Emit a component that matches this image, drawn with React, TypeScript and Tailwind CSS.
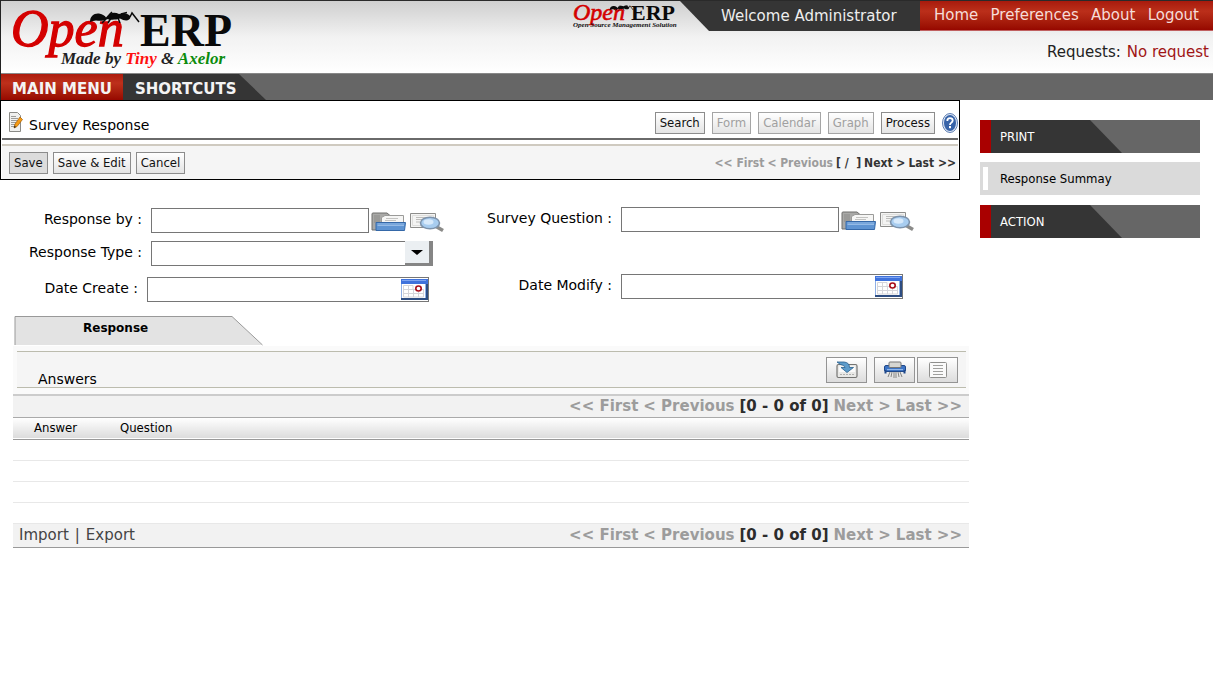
import type { ReactNode } from "react";

function Ant() {
  return (
    <g>
      <path
        d="M89 21 C89 15 93 12 98 12.500 C102 13 104 15 105 16.500 C108 12 113 10.500 118 13 C122 11.500 128 12 129.500 16 C129 20 124 20.500 119 17.500 C115 19 109 19 105.500 18 C103 20 99 20 95 19.500 C93 19.500 91 20 89 21 Z"
        fill="#0a0a0a"
      />
      <path
        d="M106 17 L101 22 M110 17 L107 22 M117 17 L119 22 M108 14 L111 11 M120 13 L126 11.500 M129 16 L131 12 L138 21"
        fill="none"
        stroke="#0a0a0a"
        strokeWidth="1.5"
      />
    </g>
  );
}

function Logo() {
  return (
    <svg viewBox="0 0 240 72" className="block h-[72px] w-[240px]" role="img" aria-label="Open ERP">
      <text
        x="10"
        y="45"
        fill="#d40000"
        stroke="#d40000"
        strokeWidth="1.3"
        className="font-['Liberation_Serif',serif] text-[52px] italic"
      >
        Open
      </text>
      <text x="139" y="45" fill="#0a0a0a" className="font-['Liberation_Serif',serif] text-[46px] font-bold">
        ERP
      </text>
      <Ant />
      <text x="60" y="63" fill="#222" className="font-['Liberation_Serif',serif] text-[17px] font-bold italic">
        Made by <tspan fill="#ff1010">Tiny</tspan> &amp; <tspan fill="#0c8c0c">Axelor</tspan>
      </text>
    </svg>
  );
}

function SmallLogo() {
  return (
    <svg viewBox="0 0 108 30" className="block h-[30px] w-[108px]" role="img" aria-label="Open ERP, Open Source Management Solution">
      <text
        x="1"
        y="19"
        fill="#d40000"
        stroke="#d40000"
        strokeWidth=".6"
        className="font-['Liberation_Serif',serif] text-[24px] italic"
      >
        Open
      </text>
      <text x="59" y="19" fill="#0a0a0a" className="font-['Liberation_Serif',serif] text-[22px] font-bold">
        ERP
      </text>
      <g transform="translate(-5 -1) scale(0.48)">
        <Ant />
      </g>
      <text x="1" y="26" fill="#111" className="font-['Liberation_Serif',serif] text-[7px] font-bold italic">
        Open Source Management Solution
      </text>
    </svg>
  );
}

function NoteIcon() {
  return (
    <svg viewBox="0 0 15 20" className="block h-5 w-[15px]" aria-hidden="true">
      <path d="M1.500 .5 H9.500 L12.500 3.500 V19.500 H1.500 Z" fill="#f0f0ee" stroke="#8a8a86" />
      <path d="M3 4.500 H8 M3 6.500 H10 M3 8.500 H9 M3 10.500 H8 M3 12.500 H7 M3 14.500 H6" stroke="#9c9c9a" />
      <path d="M6 16 L7 12 L12 5 L14.500 7.500 L9 14.500 Z" fill="#f59a12" stroke="#a35b00" strokeWidth=".7" />
      <path d="M6 16 L6.500 13.500 L8 15 Z" fill="#222" />
    </svg>
  );
}

function HelpIcon() {
  return (
    <svg viewBox="0 0 16 20" className="block h-5 w-4" aria-hidden="true">
      <ellipse cx="8" cy="10" rx="7.500" ry="9.500" fill="#e2eaf6" stroke="#5f7fb3" />
      <ellipse cx="8" cy="10" rx="6" ry="8" fill="#3763a8" />
      <path d="M5.300 8 Q5.300 5.200 8 5.200 Q10.700 5.200 10.700 7.600 Q10.700 9 9 10 Q8 10.600 8 12" fill="none" stroke="#fff" strokeWidth="1.800" />
      <rect x="7" y="13" width="2" height="2.200" fill="#fff" />
    </svg>
  );
}

function FolderIcon() {
  return (
    <svg viewBox="0 0 35 20" className="block h-5 w-[35px]" aria-hidden="true">
      <path d="M1 18 V2 Q1 1 2 1 H16 L19 3.500 H21 V18 Z" fill="#a9a9a7" stroke="#6f6f6d" />
      <path d="M3 4 H9 M3 6 H9 M3 8 H9 M3 10 H9" stroke="#8b8b89" />
      <path d="M10.500 11 V5.500 L14 3.500 H32.500 V12 H10.500 Z" fill="#f6f6f5" stroke="#9b9b99" />
      <path d="M15 6.500 H27 M14 8.500 H25" stroke="#c4c4c2" />
      <path d="M5 10.500 H34.500 L33.500 18.500 H5 Z" fill="#5f94d2" stroke="#3568a8" />
      <path d="M6.500 12 H33 M6.500 13.500 H33" stroke="#94bae6" />
    </svg>
  );
}

function FindIcon() {
  return (
    <svg viewBox="0 0 35 20" className="block h-5 w-[35px]" aria-hidden="true">
      <path d="M.5 1.500 H25.500 V15.500 H.5 Z" fill="#f4f4f3" stroke="#8d8d8b" />
      <path d="M2.500 3.500 H23.500 V13.500 H2.500 Z" fill="none" stroke="#dededc" />
      <path d="M6 5.500 H19 M6 7.500 H15 M6 10 H10" stroke="#bdbdbb" />
      <path d="M26 14.500 L33 18.500" stroke="#8b8b89" strokeWidth="3.500" />
      <ellipse cx="20" cy="11" rx="9.500" ry="5.800" fill="#a8cdf0" stroke="#7d93ac" strokeWidth="1.600" />
      <ellipse cx="18.500" cy="10" rx="5" ry="2.800" fill="#d8eafb" />
    </svg>
  );
}

function CalendarIcon() {
  return (
    <svg viewBox="0 0 27 21" className="block h-[21px] w-[27px]" aria-hidden="true">
      <rect width="27" height="21" fill="#2d4d82" />
      <rect width="25" height="19" fill="#8fb0e6" />
      <rect x="1" y="5" width="23" height="14" fill="#fff" />
      <rect width="27" height="5" fill="#3f72dc" />
      <rect x="1" y="1" width="24" height="1" fill="#7ea4f0" />
      <path
        d="M2.500 6.500 H12 V10.500 H22.500 V18 H2.500 Z M2.500 10.500 H12 M2.500 14.500 H22.500 M7.500 6.500 V18 M12.500 10.500 V18 M17.500 12 V18"
        fill="none"
        stroke="#d5d5da"
      />
      <ellipse cx="17.500" cy="9.500" rx="2.700" ry="2.500" fill="#fff" stroke="#a80f1c" strokeWidth="1.600" />
    </svg>
  );
}

function ImportIcon() {
  return (
    <svg viewBox="0 0 22 18" className="block h-[18px] w-[22px]" aria-hidden="true">
      <rect x="1" y="3.500" width="20" height="13" rx="1.500" fill="#e9e9e7" stroke="#747472" strokeWidth="1.200" />
      <path d="M3 5.500 H19 V11 H3 Z" fill="#fafafa" />
      <path d="M4 13.500 H18" stroke="#b0b0ae" strokeDasharray="2 1" />
      <path d="M1 1 H8 Q13.500 1.500 13.500 6.500 H17.500 L11 11.500 L5 6.500 H9 Q8.500 4 4.500 3.500 Z" fill="#5d9ccb" stroke="#285f8e" strokeWidth=".8" />
    </svg>
  );
}

function ShredderIcon() {
  return (
    <svg viewBox="0 0 22 18" className="block h-[18px] w-[22px]" aria-hidden="true">
      <rect x=".5" y="4.500" width="21" height="6" rx="1.500" fill="#3d74c4" stroke="#1f488a" />
      <path d="M3 8.500 H19" stroke="#8fb6ea" />
      <path d="M1.500 9 V12.500 M20.500 9 V12.500" stroke="#1f488a" strokeWidth="2" />
      <rect x="5" y="1" width="12" height="5.500" rx="1" fill="#d6d6d2" stroke="#777" />
      <path d="M6 11 L4 16 M8 11 L7 16 M10 11 V17 M12 11 V17 M14 11 L15 16 M16 11 L18 16" stroke="#858583" fill="none" />
    </svg>
  );
}

function ListIcon() {
  return (
    <svg viewBox="0 0 18 18" className="block size-[18px]" aria-hidden="true">
      <rect x=".5" y="1.500" width="17" height="15" rx="1" fill="#fafafa" stroke="#8f8f8d" />
      <path d="M4 4.500 H14 M4 7.500 H14 M4 10.500 H14 M4 13.500 H14" stroke="#a0a09e" />
    </svg>
  );
}

function Btn({ children, disabled, pressed }: { children: ReactNode; disabled?: boolean; pressed?: boolean }) {
  return (
    <button
      type="button"
      disabled={disabled}
      className={`h-[22px] border border-[#8c8c8c] px-1 font-['DejaVu_Sans_Condensed','DejaVu_Sans',sans-serif] text-[13px] leading-5 text-[#111] disabled:border-[#a5a5a5] disabled:text-[#a0a0a0] ${
        pressed ? "bg-[#dcdcdc]" : "bg-linear-to-b from-white to-[#e4e4e4]"
      }`}
    >
      {children}
    </button>
  );
}

function IconBtn({ label, children }: { label: string; children: ReactNode }) {
  return (
    <button
      type="button"
      aria-label={label}
      className="flex h-[26px] w-[41px] items-center justify-center border border-[#949494] bg-linear-to-b from-white to-[#dcdcdc]"
    >
      {children}
    </button>
  );
}

function RelationField({ id }: { id: string }) {
  return (
    <>
      <input id={id} type="text" className="h-[25px] w-[218px] border border-[#767676] bg-white px-1" />
      <button type="button" aria-label="Open record" className="ml-0.5 pt-0.5">
        <FolderIcon />
      </button>
      <button type="button" aria-label="Find record" className="ml-1 pt-0.5">
        <FindIcon />
      </button>
    </>
  );
}

function DateField({ id }: { id: string }) {
  return (
    <div className="flex h-[25px] w-[282px] items-center border border-[#767676] bg-white">
      <input id={id} type="text" className="h-full min-w-0 flex-1 px-1" />
      <button type="button" aria-label="Pick a date">
        <CalendarIcon />
      </button>
    </div>
  );
}

function ListPager() {
  return (
    <div className="flex gap-[5px] text-[15px] font-bold text-[#9c9c9c]">
      <span>&lt;&lt; First</span>
      <span>&lt; Previous</span>
      <span className="text-[#2c2c2c]">[0 - 0 of 0]</span>
      <span>Next &gt;</span>
      <span>Last &gt;&gt;</span>
    </div>
  );
}

function SideHeading({ children }: { children: ReactNode }) {
  return (
    <h2 className="flex h-[33px] border-l-[11px] border-[#a90000] bg-[#666]">
      <span className="flex w-[131px] items-center bg-[#353535] pl-[9px] font-['DejaVu_Sans_Condensed','DejaVu_Sans',sans-serif] text-[13px] text-white [clip-path:polygon(0_0,99px_0,131px_100%,0_100%)]">
        {children}
      </span>
    </h2>
  );
}

export default function App() {
  return (
    <div className="min-h-screen bg-white font-['DejaVu_Sans',sans-serif] text-[14px] text-black">
      <header className="mr-0.5 border-l border-[#222]">
        <div className="flex h-[73px] justify-between border-t border-[#2a2a2a] bg-linear-to-b from-[#cfcfcf] via-[#f2f2f2] via-50% to-white">
          <Logo />
          <div className="flex flex-col">
            <div className="flex h-[30px]">
              <SmallLogo />
              <div className="flex w-60 items-center bg-[#353535] pl-[41px] text-[15px] text-[#eee] [clip-path:polygon(0_0,100%_0,100%_100%,29px_100%)]">
                Welcome Administrator
              </div>
              <nav className="flex w-[293px] items-center justify-between border-b border-[#c06060] bg-linear-to-b from-[#a81a0c] via-[#bb2f1a] via-35% to-[#960700] px-3.5 text-[15px] text-[#f6dcd8]">
                <a href="#home">Home</a>
                <a href="#preferences">Preferences</a>
                <a href="#about">About</a>
                <a href="#logout">Logout</a>
              </nav>
            </div>
            <p className="flex flex-1 items-center justify-end gap-1.5 pr-1 text-[15px] text-[#222]">
              Requests:
              <a href="#requests" className="text-[#a01515]">
                No request
              </a>
            </p>
          </div>
        </div>
        <nav className="flex h-[27px] border-t border-[#888] bg-[#666] text-[15px] font-bold text-[#f4f4f4]">
          <a href="#menu" className="flex w-[122px] items-center justify-center bg-linear-to-b from-[#ad1b0d] via-[#bd301b] via-35% to-[#960700] pt-1">
            MAIN MENU
          </a>
          <a href="#shortcuts" className="flex w-[143px] items-center bg-[#353535] pt-1 pl-3 [clip-path:polygon(0_0,116px_0,100%_100%,0_100%)]">
            SHORTCUTS
          </a>
        </nav>
      </header>

      <div className="flex">
        <main className="min-w-0 flex-1">
          <section className="mr-5 border border-black">
            <div className="mx-px flex h-[39px] items-center justify-between border-b-2 border-[#6a6a6a] pt-1.5 pl-1.5">
              <div className="flex items-center gap-1.5">
                <div className="pb-0.5">
                  <NoteIcon />
                </div>
                <h1 className="pt-1.5 text-[14px]">Survey Response</h1>
              </div>
              <div className="flex items-center gap-[7px]">
                <Btn>Search</Btn>
                <Btn disabled>Form</Btn>
                <Btn disabled>Calendar</Btn>
                <Btn disabled>Graph</Btn>
                <Btn>Process</Btn>
                <button type="button" aria-label="Help">
                  <HelpIcon />
                </button>
              </div>
            </div>
            <div className="mx-px mt-1 flex h-[35px] items-center justify-between border-t-2 border-[#cfcac0] bg-[#f5f5f5] pr-0.5 pl-[7px]">
              <div className="flex gap-[5px]">
                <Btn pressed>Save</Btn>
                <Btn>Save &amp; Edit</Btn>
                <Btn>Cancel</Btn>
              </div>
              <div className="flex gap-[3px] font-['DejaVu_Sans_Condensed','DejaVu_Sans',sans-serif] text-[12px] font-bold whitespace-pre text-[#333]">
                <span className="text-[#9c9c9c]">&lt;&lt; First</span>
                <span className="text-[#9c9c9c]">&lt; Previous</span>
                <span>{"[ /  ]"}</span>
                <span>Next &gt;</span>
                <span>Last &gt;&gt;</span>
              </div>
            </div>
          </section>

          <form className="flex">
            <div className="flex flex-col pt-7">
              <div className="flex items-center">
                <label htmlFor="by" className="mr-[9px] w-[142px] pb-0.5 text-right">Response by :</label>
                <RelationField id="by" />
              </div>
              <div className="mt-2 flex items-center">
                <label htmlFor="type" className="mr-[9px] w-[142px] pb-0.5 text-right">Response Type :</label>
                <div className="relative">
                  <select id="type" className="block h-[25px] w-[282px] appearance-none border border-[#767676] bg-white px-1">
                    <option></option>
                  </select>
                  <span className="pointer-events-none absolute top-0 right-0 flex h-[25px] w-7 items-center justify-center border-r-4 border-b-3 border-[#858585] bg-[#ebeff2]">
                    <svg viewBox="0 0 12 5" className="h-[5px] w-3" aria-hidden="true">
                      <path d="M0 0 H12 L6 5 Z" />
                    </svg>
                  </span>
                </div>
              </div>
              <div className="mt-[11px] flex items-center">
                <label htmlFor="created" className="mr-[9px] w-[138px] pb-0.5 text-right">Date Create :</label>
                <DateField id="created" />
              </div>
            </div>
            <div className="ml-7 flex flex-col pt-[27px]">
              <div className="flex items-center">
                <label htmlFor="question" className="mr-[9px] w-[139px] pb-0.5 text-right">Survey Question :</label>
                <RelationField id="question" />
              </div>
              <div className="mt-[42px] flex items-center">
                <label htmlFor="modified" className="mr-[9px] w-[139px] pb-0.5 text-right">Date Modify :</label>
                <DateField id="modified" />
              </div>
            </div>
          </form>

          <section className="mt-3.5 mr-[11px] ml-[13px]">
            <div className="relative h-[30px] w-[250px]">
              <svg viewBox="0 0 250 30" className="absolute inset-0 h-[30px] w-[250px]" aria-hidden="true">
                <path d="M2 .5 H219 L249 29 H2 Z" fill="#e3e3e3" />
                <path d="M2 29 V.5 H219 L249.500 29" fill="none" stroke="#999" />
              </svg>
              <button type="button" className="relative ml-[70px] h-6 text-[12px] font-bold">Response</button>
            </div>

            <div className="bg-[#fafafa] pt-[5px] pr-[3px] pb-1.5 pl-1">
              <div className="flex h-[37px] items-center justify-between border-y border-[#bcbcae] bg-[#f5f5f5] pr-2 pl-[21px]">
                <h2 className="pt-5">Answers</h2>
                <div className="flex">
                  <IconBtn label="Import file">
                    <ImportIcon />
                  </IconBtn>
                  <div className="ml-[7px] flex gap-0.5">
                    <IconBtn label="Delete">
                      <ShredderIcon />
                    </IconBtn>
                    <IconBtn label="List view">
                      <ListIcon />
                    </IconBtn>
                  </div>
                </div>
              </div>
            </div>

            <div className="flex h-6 items-center justify-end border-t-2 border-b border-t-[#ccc] border-b-[#aaa] bg-[#f2f2f2] pr-[7px]">
              <ListPager />
            </div>
            <table className="w-full table-fixed border-collapse text-left">
              <thead>
                <tr className="h-[21px] border-b border-[#999] bg-linear-to-b from-white to-[#dcdcdc] font-['DejaVu_Sans_Condensed','DejaVu_Sans',sans-serif] text-[13px] leading-4">
                  <th scope="col" className="w-[107px] p-0 pl-[21px] font-normal">Answer</th>
                  <th scope="col" className="p-0 font-normal">Question</th>
                </tr>
              </thead>
              <tbody>
                {[0, 1, 2, 3].map((row) => (
                  <tr key={row} className="h-[21px] border-b border-[#e8e8e8]">
                    <td></td>
                    <td></td>
                  </tr>
                ))}
              </tbody>
            </table>
            <div className="flex h-6 items-center justify-between border-b border-[#999] bg-[#f2f2f2] pr-[7px] pl-1.5 text-[15px] text-[#444]">
              <div className="flex gap-1.5">
                <a href="#import">Import</a>|<a href="#export">Export</a>
              </div>
              <ListPager />
            </div>
          </section>
        </main>

        <aside className="mr-[15px] w-[220px] pt-5">
          <SideHeading>PRINT</SideHeading>
          <a
            href="#summary"
            className="mt-[9px] mb-2.5 flex h-[33px] items-center gap-3 bg-[#dadada] pl-[3px] font-['DejaVu_Sans_Condensed','DejaVu_Sans',sans-serif] text-[13px]"
          >
            <span className="h-[23px] w-[5px] bg-white"></span>
            Response Summay
          </a>
          <SideHeading>ACTION</SideHeading>
        </aside>
      </div>
    </div>
  );
}
